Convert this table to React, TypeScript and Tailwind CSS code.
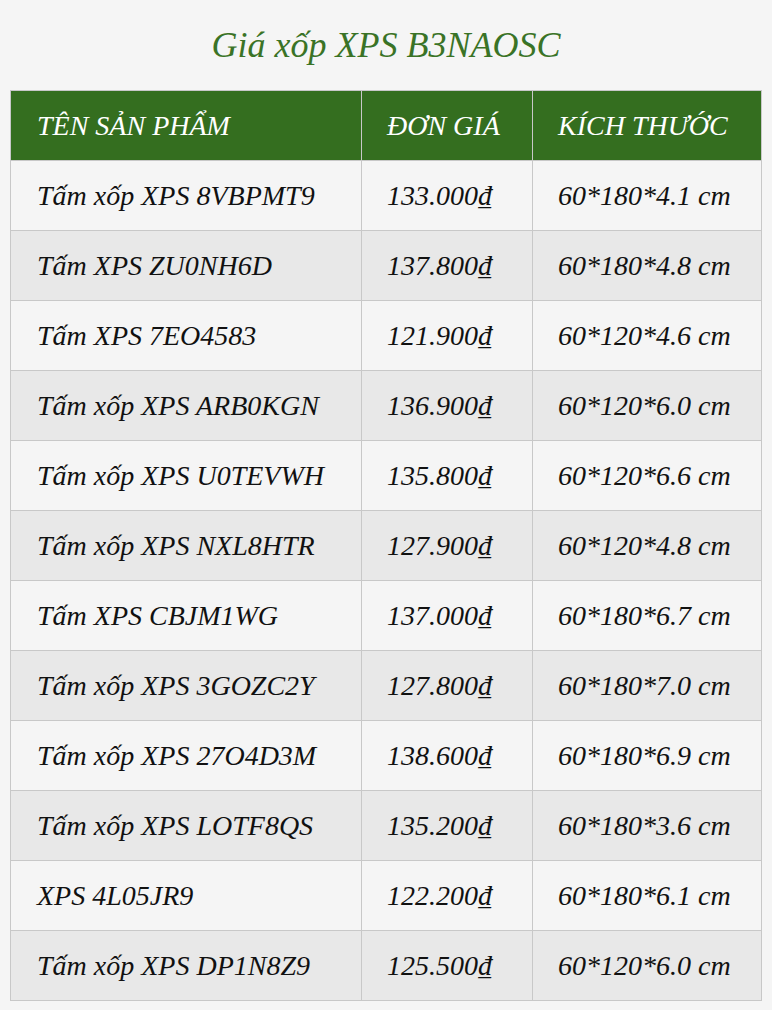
const rows = [
  ["Tấm xốp XPS 8VBPMT9", "133.000₫", "60*180*4.1 cm"],
  ["Tấm XPS ZU0NH6D", "137.800₫", "60*180*4.8 cm"],
  ["Tấm XPS 7EO4583", "121.900₫", "60*120*4.6 cm"],
  ["Tấm xốp XPS ARB0KGN", "136.900₫", "60*120*6.0 cm"],
  ["Tấm xốp XPS U0TEVWH", "135.800₫", "60*120*6.6 cm"],
  ["Tấm xốp XPS NXL8HTR", "127.900₫", "60*120*4.8 cm"],
  ["Tấm XPS CBJM1WG", "137.000₫", "60*180*6.7 cm"],
  ["Tấm xốp XPS 3GOZC2Y", "127.800₫", "60*180*7.0 cm"],
  ["Tấm xốp XPS 27O4D3M", "138.600₫", "60*180*6.9 cm"],
  ["Tấm xốp XPS LOTF8QS", "135.200₫", "60*180*3.6 cm"],
  ["XPS 4L05JR9", "122.200₫", "60*180*6.1 cm"],
  ["Tấm xốp XPS DP1N8Z9", "125.500₫", "60*120*6.0 cm"],
];

export default function App() {
  return (
    <div className="min-h-[1010px] bg-[#f5f5f5] px-[10px] pt-[21px] font-['Liberation_Serif',serif] italic">
      <h2 className="text-center text-[36px] leading-[48px] text-[#3a7326] mb-[21px]">
        Giá xốp XPS B3NAOSC
      </h2>
      <table className="w-[752px] border-collapse text-[28px]">
        <thead>
          <tr className="bg-[#346e1f] text-white h-[70px]">
            <th className="w-[351px] border border-[#c8c8c8] text-left font-normal pl-[26px]">TÊN SẢN PHẨM</th>
            <th className="w-[171px] border border-[#c8c8c8] text-left font-normal pl-[25px]">ĐƠN GIÁ</th>
            <th className="border border-[#c8c8c8] text-left font-normal pl-[25px]">KÍCH THƯỚC</th>
          </tr>
        </thead>
        <tbody>
          {rows.map((r, i) => (
            <tr key={i} className={`h-[70px] text-[#111] ${i % 2 === 0 ? "bg-[#f5f5f5]" : "bg-[#e8e8e8]"}`}>
              <td className="border border-[#c8c8c8] pl-[26px]">{r[0]}</td>
              <td className="border border-[#c8c8c8] pl-[25px]">{r[1]}</td>
              <td className="border border-[#c8c8c8] pl-[25px]">{r[2]}</td>
            </tr>
          ))}
        </tbody>
      </table>
    </div>
  );
}
